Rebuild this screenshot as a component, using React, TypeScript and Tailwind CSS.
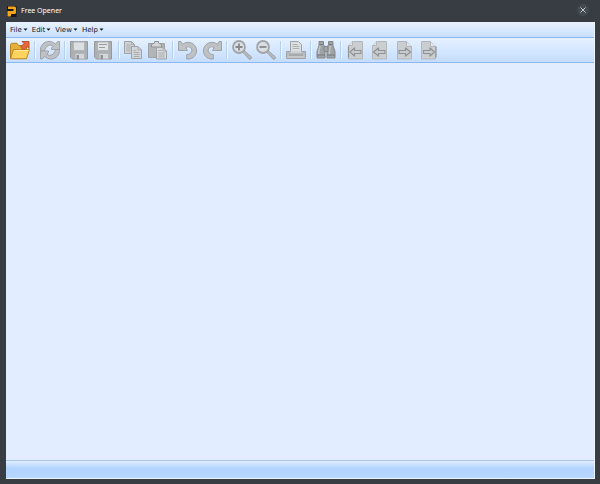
import { Fragment } from "react";
import type { ReactNode } from "react";

type Tool = { label: string; icon: ReactNode; enabled?: boolean };

const menus = ["File", "Edit", "View", "Help"];

function Icon({ children }: { children: ReactNode }) {
  return (
    <svg viewBox="0 0 24 24" className="h-6 w-6" fill="#bfc2c4" stroke="#a0a3a6" strokeWidth="1" strokeLinejoin="round" aria-hidden="true">
      {children}
    </svg>
  );
}

function Logo() {
  return (
    <svg viewBox="0 0 12 14" className="h-3.5 w-3" aria-hidden="true">
      <path d="M1 2h9.500v11H1z" fill="#17181a" />
      <path d="M2 2.500h6.500A1.500 1.500 0 0 1 10 4v4.500A1.500 1.500 0 0 1 8.500 10H5v1.500a1 1 0 0 1-1 1H1.500V7h6V5H2z" fill="#f9a51c" />
    </svg>
  );
}

const openIcon = (
  <svg viewBox="0 0 24 24" className="h-6 w-6" strokeLinejoin="round" aria-hidden="true">
    <path d="M2.500 20.500V6.500l1-1.200h5.500L10.500 7.500h8v13z" fill="#e7b139" stroke="#b58220" />
    <path d="M2.500 20.800 5.500 11.500h16l-3 9.300z" fill="#ffd45e" stroke="#bd8a24" />
    <path d="M6.500 12.500h14" stroke="#ffeb9c" />
    <path d="m12.500 9 3.500-3.500-2-2h7v7l-2-2-3.500 3.500z" fill="#e8673a" stroke="#b4492a" strokeWidth=".9" />
  </svg>
);

const refreshIcon = (
  <Icon>
    <path d="M2.500 13C2 7.500 6 3.500 11 3.500c2.700 0 4.800 1 6.200 2.600L20 3.500h1.500v8h-8V10l1.700-1.700C12.200 5.800 7.500 7.500 6.500 13z" />
    <path d="M21.500 11.500c.5 5.500-3.500 9.500-8.500 9.500-2.700 0-4.800-1-6.200-2.600L4 21H2.500v-8h8v1.500l-1.700 1.700c3 2.500 7.700.8 8.700-4.700z" />
  </Icon>
);

const saveIcon = (
  <Icon>
    <path d="M2.500 3.500h17v17.500h-15l-2-2z" fill="#adb0b2" stroke="#97999b" />
    <path d="M5.500 4h11v8.500h-11z" fill="#dcdfe2" stroke="#b3b6b8" />
    <path d="M7 15.500h9.500V21H7z" fill="#d4d6d8" stroke="#b3b6b8" />
    <path d="M8.500 17H11v4H8.500z" fill="#909396" stroke="none" />
  </Icon>
);

const saveAsIcon = (
  <Icon>
    <path d="M2.500 3.500h17v17.500h-15l-2-2z" fill="#adb0b2" stroke="#97999b" />
    <path d="M5.500 4h11v8.500h-11z" fill="#e1e3e5" stroke="#b3b6b8" />
    <path d="M7 6.500h8M7 9.500h6" stroke="#999c9e" />
    <path d="M7 15.500h9.500V21H7z" fill="#d4d6d8" stroke="#b3b6b8" />
    <path d="M8.500 17H11v4H8.500z" fill="#909396" stroke="none" />
  </Icon>
);

const copyIcon = (
  <Icon>
    <path d="M2.500 3.500h7l3 3v9h-10z" fill="#cfd2d5" />
    <path d="M9.500 3.500v3h3M4.500 7h4M4.500 9h6M4.500 11h6M4.500 13h4" fill="none" strokeWidth=".8" />
    <path d="M9.500 8.500h6.500l3.500 3.500v8.500h-10z" fill="#d3d6d8" />
    <path d="M16 8.500V12h3.500M11.500 12.500h3M11.500 14.500h6M11.500 16.500h6M11.500 18.500h6" fill="none" strokeWidth=".8" />
  </Icon>
);

const pasteIcon = (
  <Icon>
    <path d="M2.500 5.500h16v14h-16z" fill="#b2b5b7" />
    <path d="M5.500 9V6.500L8.500 5V3.500h4V5l3 1.500V9z" fill="#d3d6d9" stroke="#8f9295" />
    <path d="M10.500 9.500H17l3.500 3.500v8h-10z" fill="#d5d8da" />
    <path d="M17 9.500V13h3.500M12.500 12.500h3M12.500 15h6M12.500 17h6M12.500 19h6" fill="none" strokeWidth=".8" />
  </Icon>
);

const undoPath = "M2.500 3.500H5l1.500 2.800c3.500-2.800 8.700-2.600 11.800.7 4.200 4.300 2.700 12.200-4.800 14h-2.800v-4.300c5-.6 6.300-4.200 4.300-6.700-1.300-1.500-3.700-1.600-5.300-.4l1.800 2.900h-9z";

const undoIcon = (
  <Icon>
    <path d={undoPath} />
  </Icon>
);

const redoIcon = (
  <Icon>
    <path d={undoPath} transform="matrix(-1 0 0 1 24 0)" />
  </Icon>
);

const zoomInIcon = (
  <Icon>
    <path d="m14 12.500 7.500 6.500c.6 1-1.200 2.900-2.300 2.300l-6.700-7.300z" fill="#b6b9bb" />
    <circle cx="9" cy="9" r="6" fill="#d9dfe5" stroke="#a2a5a7" strokeWidth="1.800" />
    <path d="M9 5.500v7M5.500 9h7" stroke="#85898b" strokeWidth="1.800" />
  </Icon>
);

const zoomOutIcon = (
  <Icon>
    <path d="m14 12.500 7.500 6.500c.6 1-1.200 2.900-2.300 2.300l-6.700-7.300z" fill="#b6b9bb" />
    <circle cx="9" cy="9" r="6" fill="#d9dfe5" stroke="#a2a5a7" strokeWidth="1.800" />
    <path d="M5.500 9h7" stroke="#85898b" strokeWidth="1.800" />
  </Icon>
);

const printIcon = (
  <Icon>
    <path d="M6.500 3.500h8l3 3v8h-11z" fill="#dde0e3" />
    <path d="M8.500 6.500h5M8.500 8.500h7M8.500 10.500h7" strokeWidth=".8" />
    <path d="M2.500 13.500h4v2h11v-2h4v7h-19z" fill="#b9bcbe" />
    <path d="M6.500 13h11v2.500h-11z" fill="#cfd2d4" stroke="none" />
    <path d="M5 17h14" stroke="#94979a" />
    <path d="M3.500 19h17" stroke="#d0d3d4" />
  </Icon>
);

const findIcon = (
  <Icon>
    <g fill="#a0a3a5" stroke="#85888b">
      <path d="M5 3.500h4.500v3l1.500 3V20H3v-6.500l2-6z" />
      <path d="M19 3.500h-4.500v3l-1.500 3V20h8v-6.500l-2-6z" />
      <path d="M10 8.500h4v5h-4z" />
    </g>
    <path d="M6 8 4.800 13.500v3M16.200 8l-.7 5.500v3" fill="none" stroke="#c3c6c8" strokeWidth="1.500" />
    <path d="M5.500 6.500h4M14.500 6.500h4M3 17h8M13 17h8" stroke="#76797c" />
  </Icon>
);

function PageIcon({ arrow, folded }: { arrow: string; folded?: boolean }) {
  return (
    <Icon>
      {folded ? (
        <path d="M5.500 3.500h9l5 5v12.500h-14z" fill="#cbced0" stroke="#b4b7ba" />
      ) : (
        <path d="M8.500 3.500h10v17.500h-14v-13.500z" fill="#cbced0" stroke="#b4b7ba" />
      )}
      <path d={folded ? "M14.500 3.500v5h5" : "M8.500 3.500v4h-4"} fill="#e4e7e9" stroke="#b4b7ba" />
      <path d={arrow} fill="#c9ccce" stroke="#909396" strokeWidth="1.200" />
    </Icon>
  );
}

const groups: Tool[][] = [
  [{ label: "Open", icon: openIcon, enabled: true }],
  [{ label: "Refresh", icon: refreshIcon }],
  [{ label: "Save", icon: saveIcon }, { label: "Save As", icon: saveAsIcon }],
  [{ label: "Copy", icon: copyIcon }, { label: "Paste", icon: pasteIcon }],
  [{ label: "Undo", icon: undoIcon }, { label: "Redo", icon: redoIcon }],
  [{ label: "Zoom In", icon: zoomInIcon }, { label: "Zoom Out", icon: zoomOutIcon }],
  [{ label: "Print", icon: printIcon }],
  [{ label: "Find", icon: findIcon }],
  [
    { label: "First Page", icon: <PageIcon arrow="M4.500 8.500v11M6 14l4.500-4v2.500H17v3h-6.500V18z" /> },
    { label: "Previous Page", icon: <PageIcon arrow="m5.500 14 5-4v2.500H17v3h-6.500V18z" /> },
    { label: "Next Page", icon: <PageIcon folded arrow="m18.500 14-5-4v2.500H7v3h6.500V18z" /> },
    { label: "Last Page", icon: <PageIcon folded arrow="M20 8.500v11M18.500 14 14 10v2.500H7.500v3H14V18z" /> },
  ],
];

export default function App() {
  return (
    <div className="flex min-h-screen flex-col bg-[#373d43] pr-[5px] pb-[5px] pl-1.5 font-['DejaVu_Sans',sans-serif] text-[7px] leading-3">
      <header className="flex h-[22px] items-center text-white">
        <Logo />
        <h1 className="ml-[3px] font-['Noto_Sans',sans-serif]">Free Opener</h1>
        <button aria-label="Close" className="mr-1.5 mb-[3px] ml-auto grid h-3 w-3 place-items-center rounded-full bg-[#434a50]">
          <svg viewBox="0 0 6 6" className="h-1.5 w-1.5" fill="none" stroke="#c5c9cc" aria-hidden="true">
            <path d="m.5.5 5 5m0-5-5 5" />
          </svg>
        </button>
      </header>

      <main className="flex flex-1 flex-col border-r border-b border-[#eef5ff] bg-[#e2eeff]">
        <nav className="flex h-[15px] items-center gap-1 bg-linear-to-b from-[#eaf3ff] to-[#c8dfff] pl-1 text-[#101820]">
          {menus.map((menu) => (
            <button key={menu} className="flex items-center gap-px">
              {menu}
              <svg viewBox="0 0 5 3" className="h-[3px] w-[5px]" fill="#101820" aria-hidden="true">
                <path d="M.5.500h4L2.500 2.800z" />
              </svg>
            </button>
          ))}
        </nav>

        <div role="toolbar" aria-label="Main" className="flex h-[26px] items-start border-y border-[#8db8ee] bg-linear-to-b from-[#e6f1ff] to-[#c4ddff] pl-0.5">
          {groups.map((group, i) => (
            <Fragment key={group[0].label}>
              {i > 0 && (
                <div className="flex h-6 w-1.5 items-center justify-center">
                  <div className="h-[18px] w-0.5 border-r border-l border-r-[#f1f7ff] border-l-[#b4d0f4]" />
                </div>
              )}
              {group.map((tool) => (
                <button key={tool.label} aria-label={tool.label} disabled={!tool.enabled}>
                  {tool.icon}
                </button>
              ))}
            </Fragment>
          ))}
        </div>

        <section className="flex-1" aria-label="Document" />

        <footer className="h-[18px] border-t border-[#a9c8e8] bg-linear-to-b from-[#e0edff] from-0% via-[#b1d3ff] via-45% to-[#b7d8ff]" />
      </main>
    </div>
  );
}
